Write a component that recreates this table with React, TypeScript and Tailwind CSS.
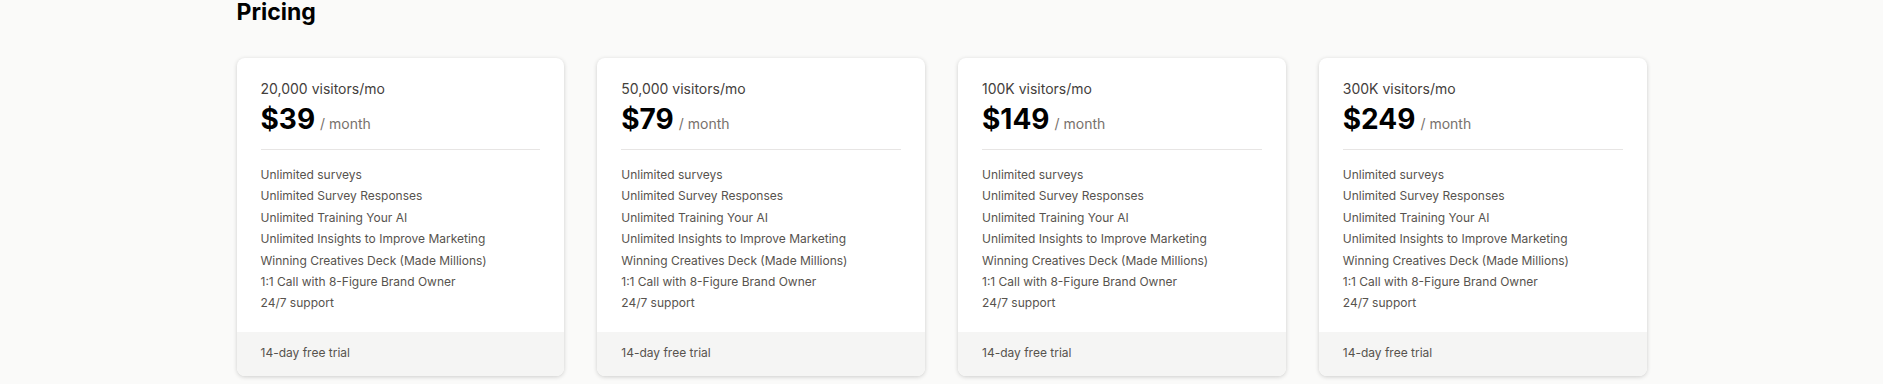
const plans = [
  { visitors: "20,000 visitors/mo", price: "$39" },
  { visitors: "50,000 visitors/mo", price: "$79" },
  { visitors: "100K visitors/mo", price: "$149" },
  { visitors: "300K visitors/mo", price: "$249" },
];

const features = [
  "Unlimited surveys",
  "Unlimited Survey Responses",
  "Unlimited Training Your AI",
  "Unlimited Insights to Improve Marketing",
  "Winning Creatives Deck (Made Millions)",
  "1:1 Call with 8-Figure Brand Owner",
  "24/7 support",
];

function PlanCard({ visitors, price }: { visitors: string; price: string }) {
  return (
    <div className="flex flex-col bg-white rounded-lg shadow-[0_1px_4px_rgba(0,0,0,0.18)] overflow-hidden">
      <div className="px-6 pt-[21px] pb-[18px]">
        <p className="text-sm leading-5 text-[#44403c]">{visitors}</p>
        <div className="flex items-baseline gap-[5px] mt-[2px]">
          <span className="text-[28px] leading-9 font-bold text-black">{price}</span>
          <span className="text-sm text-[#78716c]">/ month</span>
        </div>
        <div className="mt-[12px] h-px bg-[#e7e5e4]"></div>
        <ul className="mt-[14px] text-xs leading-[21.4px] text-[#57534e]">
          {features.map((f) => (
            <li key={f}>{f}</li>
          ))}
        </ul>
      </div>
      <div className="bg-[#f5f5f4] px-6 pt-[11.5px] pb-[12.5px] text-xs leading-5 text-[#57534e]">
        14-day free trial
      </div>
    </div>
  );
}

export default function App() {
  return (
    <div className="min-h-screen bg-[#fafaf9] font-['Inter',sans-serif]">
      <div className="mx-auto w-[1410px]">
        <h1 className="-mt-[4px] mb-[30px] text-[23px] leading-8 font-bold text-black">Pricing</h1>
        <div className="grid grid-cols-4 gap-[33px]">
          {plans.map((p) => (
            <PlanCard key={p.price} visitors={p.visitors} price={p.price} />
          ))}
        </div>
      </div>
    </div>
  );
}
